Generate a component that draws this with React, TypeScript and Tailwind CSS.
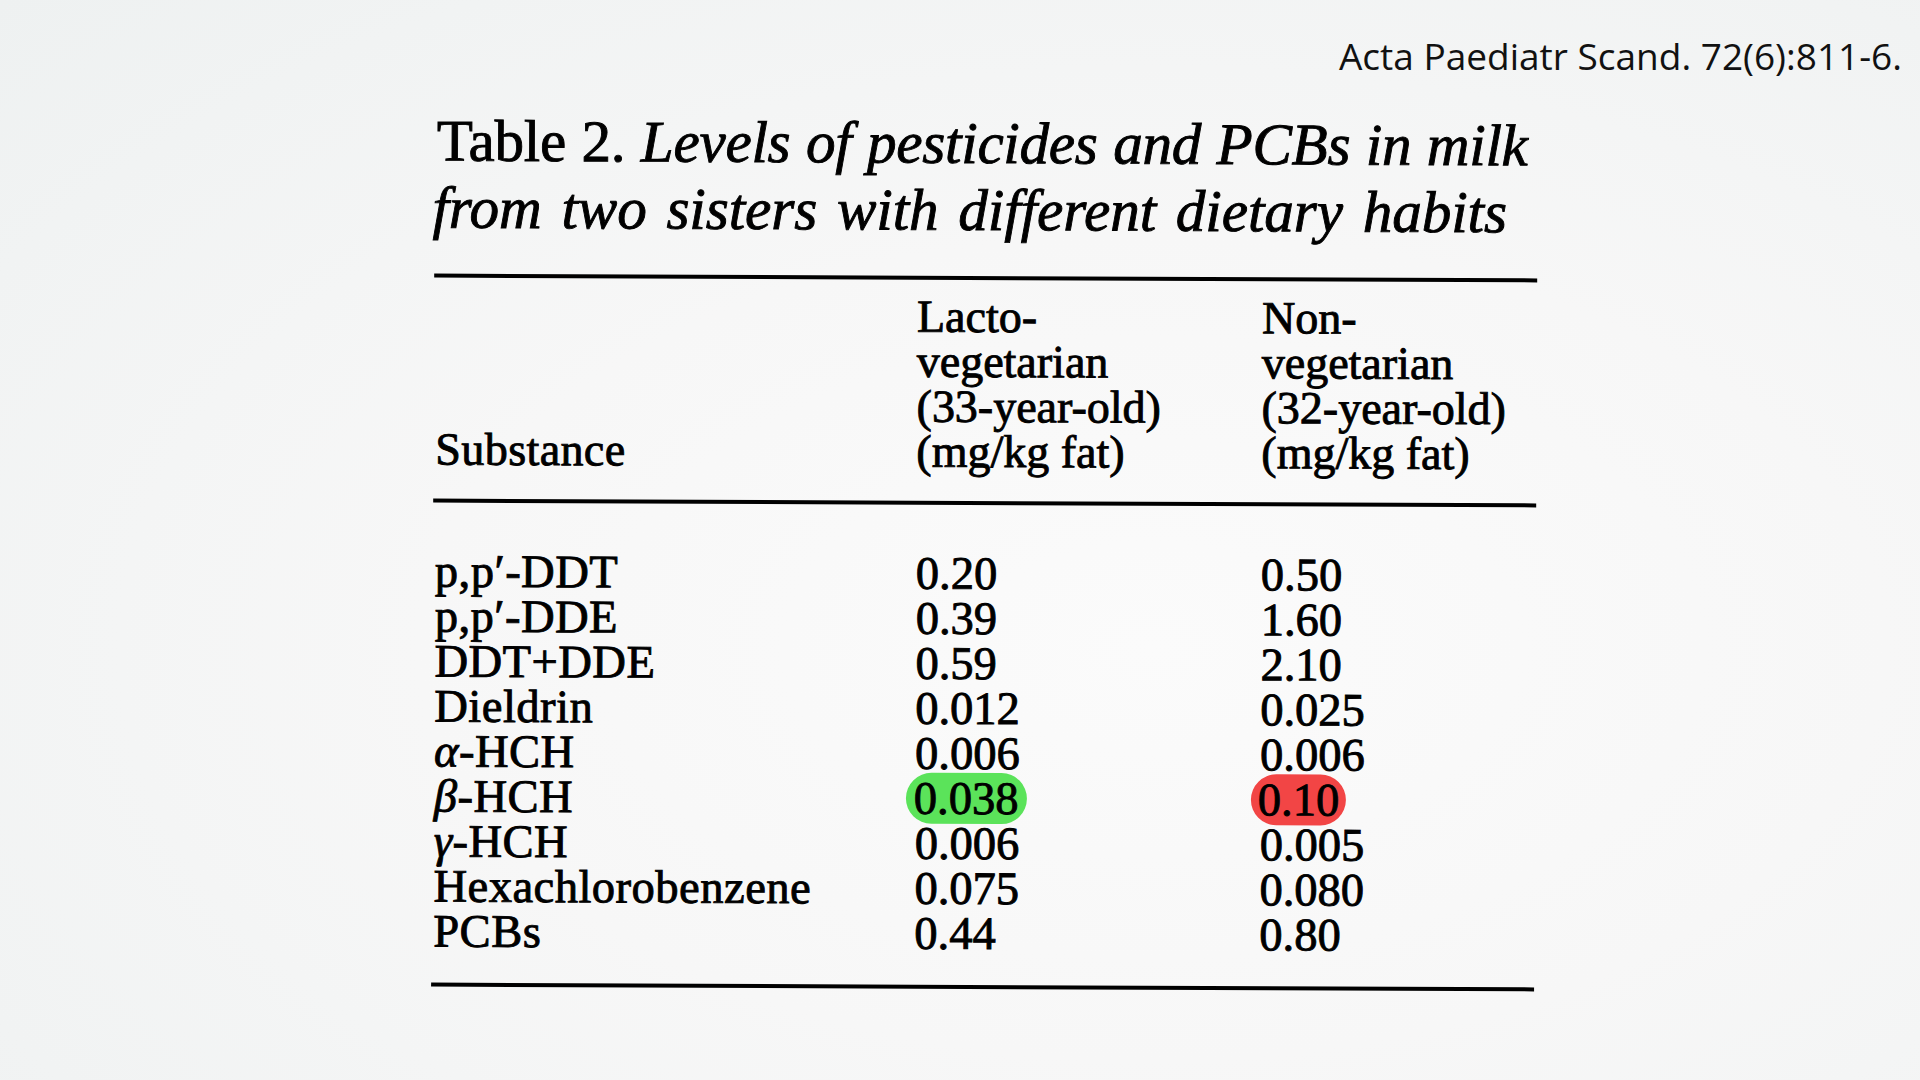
const rows = [
  { name: <>p,p′-DDT</>, lacto: "0.20", non: "0.50" },
  { name: <>p,p′-DDE</>, lacto: "0.39", non: "1.60" },
  { name: <>DDT+DDE</>, lacto: "0.59", non: "2.10" },
  { name: <>Dieldrin</>, lacto: "0.012", non: "0.025" },
  { name: <><i>α</i>-HCH</>, lacto: "0.006", non: "0.006" },
  { name: <><i>β</i>-HCH</>, lacto: "0.038", non: "0.10", highlight: true },
  { name: <><i>γ</i>-HCH</>, lacto: "0.006", non: "0.005" },
  { name: <>Hexachlorobenzene</>, lacto: "0.075", non: "0.080" },
  { name: <>PCBs</>, lacto: "0.44", non: "0.80" },
];

const serif = "font-['Liberation_Serif','Times_New_Roman',serif] text-black [-webkit-text-stroke:0.9px_#000]";

const Rule = () => <div className="h-[4px] w-full bg-black" />;

export default function App() {
  return (
    <div className="w-[1920px] h-[1080px] overflow-hidden bg-[radial-gradient(ellipse_at_60%_60%,#fbfbfb_0%,#f7f7f7_45%,#eef1f1_100%)]">
      <div className="flex justify-end pt-[31px] pr-[18px]">
        <p className="font-['Open_Sans',sans-serif] text-[37px] leading-[50px] text-[#111]">
          Acta Paediatr Scand. 72(6):811-6.
        </p>
      </div>

      <div className={`ml-[433px] mt-[29px] w-[1103px] rotate-[0.25deg] ${serif}`}>
        <h1 className="pl-[2px] whitespace-nowrap text-[59px] leading-[67px]">
          <div className="-tracking-[0.2px] [word-spacing:1px]">
            Table 2. <i>Levels of pesticides and PCBs in milk</i>
          </div>
          <div className="-ml-[4px] [word-spacing:5px]">
            <i>from two sisters with different dietary habits</i>
          </div>
        </h1>

        <div className="mt-[32px]">
          <Rule />
        </div>

        <div className="grid grid-cols-[481px_345px_1fr] items-end pt-[14px] pb-[27px] pl-[2px] text-[46px] leading-[45px]">
          <div className="tracking-[0.4px]">Substance</div>
          <div>
            Lacto-
            <br />
            vegetarian
            <br />
            (33-year-old)
            <br />
            (mg/kg fat)
          </div>
          <div>
            Non-
            <br />
            vegetarian
            <br />
            (32-year-old)
            <br />
            (mg/kg fat)
          </div>
        </div>

        <Rule />

        <div className="pt-[46px] pb-[29px] pl-[2px] text-[46.5px] leading-[45px]">
          {rows.map((r, i) => (
            <div key={i} className="grid grid-cols-[481px_345px_1fr]">
              <div className="tracking-[0.5px]">{r.name}</div>
              <div>
                {r.highlight ? (
                  <span className="inline-block -ml-[9px] px-[8px] py-[3px] -my-[3px] rounded-full bg-[#5be35a]">{r.lacto}</span>
                ) : (
                  r.lacto
                )}
              </div>
              <div>
                {r.highlight ? (
                  <span className="inline-block -ml-[9px] px-[7px] py-[3px] -my-[3px] rounded-full bg-[#f24545]">{r.non}</span>
                ) : (
                  r.non
                )}
              </div>
            </div>
          ))}
        </div>

        <Rule />
      </div>
    </div>
  );
}
